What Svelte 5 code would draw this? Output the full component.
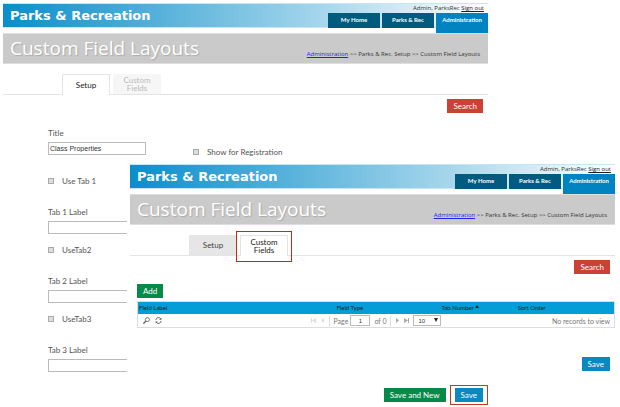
<script>
  const navItems = ['My Home', 'Parks & Rec', 'Administration'];
  const tabs = ['Setup', 'Custom Fields'];
  const pageSizes = [10, 20, 50];

  let title = $state('Class Properties');
  let showForRegistration = $state(false);
  let tabFields = $state([
    { toggle: 'Use Tab 1', label: 'Tab 1 Label', used: false, value: '' },
    { toggle: 'UseTab2', label: 'Tab 2 Label', used: false, value: '' },
    { toggle: 'UseTab3', label: 'Tab 3 Label', used: false, value: '' }
  ]);
  let page = $state('1');
  let pageSize = $state(10);
</script>

{#snippet windowTop(activeTab, marked)}
  <header class="top">
    <div class="brand">Parks &amp; Recreation</div>
    <div class="account">
      <div class="user">Admin, ParksRec <a href="#signout">Sign out</a></div>
      <nav>
        {#each navItems as item}
          <a href="#nav" class:current={item === 'Administration'}>{item}</a>
        {/each}
      </nav>
    </div>
  </header>
  <div class="banner">
    <h1>Custom Field Layouts</h1>
    <div class="crumbs">
      <a href="#admin">Administration</a> &gt;&gt; Parks &amp; Rec. Setup &gt;&gt; Custom Field Layouts
    </div>
  </div>
  <div class="tabs">
    {#each tabs as tab}
      <button
        class="tab"
        class:active={tab === activeTab}
        class:disabled={!marked && tab !== activeTab}
        class:marked={marked && tab === activeTab}>{tab}</button
      >
    {/each}
  </div>
{/snippet}

<div class="desktop">
  <!-- Setup tab -->
  <section class="window back">
    {@render windowTop('Setup', false)}
    <div class="actions"><button class="btn red">Search</button></div>

    <form class="form">
      <div class="titleRow">
        <div class="field">
          <label for="title">Title</label>
          <input id="title" class="short" type="text" bind:value={title} />
        </div>
        <label class="check">
          <input type="checkbox" bind:checked={showForRegistration} />
          Show for Registration
        </label>
      </div>
      {#each tabFields as field, i}
        <div class="group">
          <label class="check">
            <input type="checkbox" bind:checked={field.used} />
            {field.toggle}
          </label>
          <div class="field">
            <label for="tab{i}">{field.label}</label>
            <input id="tab{i}" type="text" bind:value={field.value} />
          </div>
        </div>
      {/each}
    </form>

    <div class="footer">
      <button class="btn green">Save and New</button>
      <span class="frame"><button class="btn blue">Save</button></span>
    </div>
  </section>

  <!-- Custom Fields tab -->
  <section class="window front">
    {@render windowTop('Custom Fields', true)}
    <div class="actions"><button class="btn red">Search</button></div>

    <div class="grid">
      <button class="btn green">Add</button>
      <table>
        <thead>
          <tr>
            <th class="c1">Field Label</th>
            <th class="c2">Field Type</th>
            <th class="c3">
              Tab Number
              <svg class="sort" viewBox="0 0 4 3"><path d="M0 3L2 0L4 3Z" fill="#123" /></svg>
            </th>
            <th>Sort Order</th>
          </tr>
        </thead>
        <tbody>
          <tr>
            <td colspan="4">
              <div class="pager">
                <div class="tools">
                  <button class="icon" aria-label="Find">
                    <svg viewBox="0 0 16 16" fill="none" stroke="#555">
                      <circle cx="10" cy="6" r="4.6" stroke-width="1.8" />
                      <path d="M6.5 9.5L1 15" stroke-width="3" />
                    </svg>
                  </button>
                  <button class="icon" aria-label="Reload">
                    <svg viewBox="0 0 16 16" fill="none" stroke="#555" stroke-width="2">
                      <path d="M2 7A6 6 0 0 1 13 4M14 9A6 6 0 0 1 3 12" />
                      <path d="M14.5 1V6H9.5ZM1.5 15V10H6.5Z" fill="#555" stroke="none" />
                    </svg>
                  </button>
                </div>
                <div class="pages">
                  <button class="arrow off" aria-label="First page">
                    <svg viewBox="0 0 5 5"><path d="M0 0H1V5H0ZM5 0V5L1 2.5Z" /></svg>
                  </button>
                  <button class="arrow off" aria-label="Previous page">
                    <svg viewBox="0 0 5 5"><path d="M4 0V5L1 2.5Z" /></svg>
                  </button>
                  <span class="bar"></span>
                  <label for="page">Page</label>
                  <input id="page" type="text" bind:value={page} />
                  <span>of 0</span>
                  <span class="bar"></span>
                  <button class="arrow" aria-label="Next page">
                    <svg viewBox="0 0 5 5"><path d="M1 0V5L4 2.5Z" /></svg>
                  </button>
                  <button class="arrow" aria-label="Last page">
                    <svg viewBox="0 0 5 5"><path d="M0 0V5L4 2.5ZM4 0H5V5H4Z" /></svg>
                  </button>
                  <span class="size">
                    <select bind:value={pageSize} aria-label="Records per page">
                      {#each pageSizes as size}
                        <option value={size}>{size}</option>
                      {/each}
                    </select>
                    <svg viewBox="0 0 4 4"><path d="M0 0H4L2 4Z" fill="#222" /></svg>
                  </span>
                </div>
                <div class="empty">No records to view</div>
              </div>
            </td>
          </tr>
        </tbody>
      </table>
    </div>

    <div class="actions save"><button class="btn blue">Save</button></div>
  </section>
</div>

<style>
  :global(body) {
    background: #fff;
  }

  .desktop {
    position: relative;
    font-family: Lato, 'Noto Sans', sans-serif;
    font-size: 8px;
    line-height: 10px;
    color: #555;
  }

  .desktop * {
    box-sizing: border-box;
  }

  button,
  input,
  select {
    font: inherit;
    margin: 0;
    padding: 0;
    border: none;
    border-radius: 0;
    background: none;
  }

  .window {
    background: #fff;
    padding: 3px 0 0 3px;
  }

  .back {
    margin-right: 132px;
  }

  .front {
    position: absolute;
    top: 161px;
    left: 127px;
    right: 5px;
  }

  .top {
    display: flex;
    justify-content: space-between;
    height: 25px;
    background: linear-gradient(to right, #0a8ecb, #9fd3ea 63%, #fff);
    border-top: 1px solid #c5e6f3;
    border-bottom: 1px solid #c5e6f3;
  }

  .brand {
    padding-left: 7px;
    font-family: 'DejaVu Sans', sans-serif;
    font-size: 13px;
    font-weight: bold;
    line-height: 24px;
    color: #fff;
  }

  .user {
    padding-right: 4px;
    font-family: 'Open Sans', sans-serif;
    font-size: 6px;
    line-height: 9px;
    text-align: right;
    color: #333;
  }

  .user a {
    color: #222;
  }

  nav {
    display: flex;
    gap: 2px;
  }

  nav a {
    width: 52px;
    height: 15px;
    background: #005b7f;
    color: #fff;
    font-size: 6px;
    font-weight: bold;
    line-height: 14px;
    text-align: center;
    text-decoration: none;
  }

  nav .current {
    height: 20px;
    background: #0083c1;
  }

  .banner {
    display: flex;
    justify-content: space-between;
    height: 31px;
    margin-top: 5px;
    padding: 0 8px 0 7px;
    background: #cacaca;
    border-top: 1px solid #dedede;
    border-bottom: 1px solid #dedede;
  }

  h1 {
    margin: 0;
    font-family: 'Open Sans', sans-serif;
    font-size: 19px;
    font-weight: 400;
    line-height: 29px;
    color: #fff;
    text-shadow: 1px 1px 1px #aaa;
    white-space: nowrap;
  }

  .crumbs {
    padding-top: 14px;
    font-family: 'Open Sans', sans-serif;
    font-size: 6px;
    line-height: 12px;
    color: #333;
    white-space: nowrap;
  }

  .crumbs a {
    color: #22e;
  }

  .tabs {
    display: flex;
    gap: 3px;
    margin-top: 10px;
    padding-left: 59px;
    border-bottom: 1px solid #e4e4e4;
  }

  .tab {
    position: relative;
    width: 48px;
    height: 20px;
    padding: 0 8px;
    background: #e6e6e6;
    color: #444;
    line-height: 8px;
  }

  .tab.active {
    height: 21px;
    margin-bottom: -1px;
    background: #fff;
    border: 1px solid #e4e4e4;
    border-bottom: none;
    color: #222;
  }

  .tab.disabled {
    background: #f6f6f6;
    color: #bbb;
  }

  .tab.marked::after {
    content: '';
    position: absolute;
    inset: -5px -5px -6px;
    border: 1px solid #bf2c18;
  }

  .actions {
    display: flex;
    justify-content: flex-end;
    padding: 4px 5px 0 0;
  }

  .btn {
    height: 14px;
    padding: 0 6px;
    color: #fff;
    line-height: 14px;
  }

  .red {
    background: #cc4135;
  }

  .green {
    background: #058a4a;
  }

  .blue {
    background: #0a88c2;
  }

  .form {
    padding: 15px 0 0 45px;
  }

  .titleRow {
    display: flex;
    align-items: flex-start;
    gap: 47px;
    height: 29px;
    margin-bottom: 19px;
  }

  .titleRow .check {
    align-self: flex-end;
  }

  .field {
    display: flex;
    flex-direction: column;
    gap: 4px;
  }

  .field input {
    width: 100px;
    height: 13px;
    padding: 0 1px;
    border: 1px solid #bbb;
    font-family: 'Liberation Sans', sans-serif;
    font-size: 7px;
    color: #333;
  }

  .field .short {
    width: 98px;
  }

  .check {
    display: flex;
    align-items: center;
    gap: 8px;
  }

  .check input {
    appearance: none;
    width: 6px;
    height: 6px;
    border: 1px solid #aaa;
    background: #ddd;
  }

  .check input:checked {
    background: #555;
  }

  .group {
    display: flex;
    flex-direction: column;
    gap: 21px;
    margin-bottom: 11px;
  }

  .footer {
    display: flex;
    justify-content: flex-end;
    align-items: center;
    gap: 4px;
    padding-top: 2px;
  }

  .frame {
    display: flex;
    padding: 2px;
    border: 1px solid #c0392b;
  }

  .frame .btn {
    margin: 0 2px;
  }

  .grid {
    padding: 10px 0 0 7px;
  }

  table {
    width: 100%;
    margin-top: 3px;
    border: 1px solid #ddd;
    border-collapse: collapse;
    table-layout: fixed;
  }

  th {
    height: 12px;
    padding: 0 0 0 1px;
    background: #049dd7;
    color: #001a26;
    font-size: 6px;
    font-weight: 400;
    line-height: 12px;
    text-align: left;
    white-space: nowrap;
  }

  .c1 {
    width: 41.5%;
  }

  .c2 {
    width: 22%;
  }

  .c3 {
    width: 16%;
  }

  .sort {
    width: 4px;
    height: 3px;
    vertical-align: 2px;
  }

  td {
    padding: 0;
  }

  .pager {
    display: grid;
    grid-template-columns: 1fr auto 1fr;
    align-items: center;
    height: 13px;
    font-size: 7px;
    color: #777;
  }

  .tools {
    display: flex;
    gap: 5px;
    padding-left: 5px;
  }

  .icon,
  .icon svg {
    display: block;
    width: 7px;
    height: 7px;
  }

  .pages {
    display: flex;
    align-items: center;
    gap: 4px;
  }

  .arrow,
  .arrow svg {
    display: block;
    width: 5px;
    height: 5px;
    fill: #aaa;
  }

  .arrow.off svg {
    fill: #ddd;
  }

  .bar {
    width: 1px;
    height: 10px;
    background: #ddd;
  }

  .pages label {
    margin-right: -2px;
  }

  .pages input,
  select {
    width: 20px;
    height: 11px;
    border: 1px solid #bbb;
    font-family: 'Liberation Sans', sans-serif;
    font-size: 6px;
    color: #333;
    text-align: center;
  }

  .size {
    position: relative;
    display: flex;
  }

  select {
    appearance: none;
    width: 28px;
    padding-left: 4px;
    text-align: left;
  }

  .size svg {
    position: absolute;
    top: 3px;
    right: 3px;
    width: 4px;
    height: 4px;
    pointer-events: none;
  }

  .empty {
    padding-right: 4px;
    text-align: right;
  }

  .save {
    padding-top: 29px;
    padding-bottom: 5px;
  }
</style>
